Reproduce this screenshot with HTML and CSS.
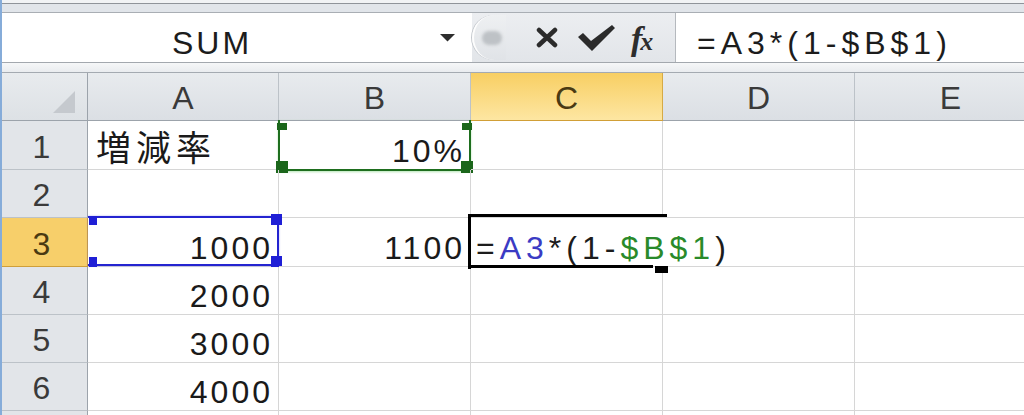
FILE: index.html
```html
<!DOCTYPE html>
<html lang="ja">
<head>
<meta charset="utf-8">
<title>Book1</title>
<link rel="stylesheet" href="styles.css">
</head>
<body>
<div class="app">
  <div class="ribbon-edge"></div>

  <div class="formula-bar">
    <div class="name-box">
      <span class="name">SUM</span>
      <span class="dd">
        <svg width="15" height="8" viewBox="0 0 15 8"><path d="M0 0H15L7.5 7.5Z" fill="#2e2e2e"/></svg>
      </span>
    </div>
    <div class="fb-buttons">
      <span class="grip"><span class="grip-dot"></span></span>
      <svg class="btn-cancel" width="22" height="21" viewBox="0 0 22 21"><path d="M3 3L19 18M19 3L3 18" stroke="#2b2b2b" stroke-width="4.5" stroke-linecap="round"/></svg>
      <svg class="btn-enter" width="38" height="27" viewBox="0 0 38 27"><path d="M1 13L6 9L14 17L35 1L38 4L15 27Z" fill="#2b2b2b"/></svg>
      <span class="fx">f<span class="fx-x">x</span></span>
    </div>
    <div class="fb-input">=A3*(1-$B$1)</div>
  </div>

  <div class="fb-gap"></div>

  <div class="sheet">
    <!-- column headers -->
    <div class="corner"><span class="tri"></span></div>
    <div class="cell hd">A</div>
    <div class="cell hd">B</div>
    <div class="cell hd hd-on">C</div>
    <div class="cell hd">D</div>
    <div class="cell hd">E</div>

    <!-- row 1 -->
    <div class="cell rh">1</div>
    <div class="cell jp">増減率</div>
    <div class="cell num">10%
      <div class="range range-green">
        <i class="h tl"></i><i class="h tr"></i><i class="h bl"></i><i class="h br"></i>
      </div>
    </div>
    <div class="cell"></div>
    <div class="cell"></div>
    <div class="cell"></div>

    <!-- row 2 -->
    <div class="cell rh">2</div>
    <div class="cell"></div>
    <div class="cell"></div>
    <div class="cell"></div>
    <div class="cell"></div>
    <div class="cell"></div>

    <!-- row 3 -->
    <div class="cell rh rh-on">3</div>
    <div class="cell num">1000
      <div class="range range-blue">
        <i class="h tl"></i><i class="h tr"></i><i class="h bl"></i><i class="h br"></i>
      </div>
    </div>
    <div class="cell num">1100</div>
    <div class="cell active">
      <div class="editor">=<span class="ref-a">A3</span>*(1-<span class="ref-b">$B$1</span>)</div>
      <i class="cur cur-top"></i><i class="cur cur-left"></i><i class="cur cur-bottom"></i><i class="cur fill-handle"></i>
    </div>
    <div class="cell"></div>
    <div class="cell"></div>

    <!-- row 4 -->
    <div class="cell rh">4</div>
    <div class="cell num">2000</div>
    <div class="cell"></div>
    <div class="cell"></div>
    <div class="cell"></div>
    <div class="cell"></div>

    <!-- row 5 -->
    <div class="cell rh">5</div>
    <div class="cell num">3000</div>
    <div class="cell"></div>
    <div class="cell"></div>
    <div class="cell"></div>
    <div class="cell"></div>

    <!-- row 6 -->
    <div class="cell rh">6</div>
    <div class="cell num">4000</div>
    <div class="cell"></div>
    <div class="cell"></div>
    <div class="cell"></div>
    <div class="cell"></div>

    <!-- row 7 (only its top edge is in view) -->
    <div class="cell rh"></div>
    <div class="cell"></div>
    <div class="cell"></div>
    <div class="cell"></div>
    <div class="cell"></div>
    <div class="cell"></div>
  </div>
</div>
</body>
</html>
```

FILE: styles.css
```css
html, body {
  margin: 0;
  padding: 0;
  background: #fff;
}

body {
  width: 1024px;
  height: 415px;
  overflow: hidden;
  font-family: "Liberation Sans", "Noto Sans CJK JP", sans-serif;
  color: #1a1a1a;
}

.app {
  height: 415px;
  box-sizing: border-box;
  border-left: 2px solid #86acd9;
  overflow: hidden;
}

/* thin strip left of the ribbon above the formula bar */
.ribbon-edge {
  height: 13px;
  box-sizing: border-box;
  border-bottom: 1px solid #a9aeb4;
  background: linear-gradient(to bottom, #f1f3f5 0 3px, #8f949a 3px 4px, #e1e5ea 4px);
}

/* ---------- formula bar ---------- */
.formula-bar {
  display: flex;
  height: 50px;
  box-sizing: border-box;
  border-bottom: 1px solid #a3a8ae;
  font-size: 32px;
  line-height: 1;
}

.name-box {
  width: 470px;
  display: flex;
  align-items: center;
  padding-top: 10px;
  box-sizing: border-box;
  background: #fff;
}

.name {
  flex: 1;
  text-align: center;
  letter-spacing: 3px;
  color: #1c1c1c;
}

.dd {
  width: 50px;
  display: flex;
  justify-content: center;
  margin-top: -10px;
}

.fb-buttons {
  width: 203px;
  display: flex;
  align-items: center;
  background: linear-gradient(to bottom, #eceef1, #e2e5e9);
}

.grip {
  width: 34px;
  height: 45px;
  box-sizing: border-box;
  border-radius: 23px 0 0 23px;
  border-left: 2px solid #fdfdfd;
  box-shadow: -1px 0 0 #c4c8cd;
  background: linear-gradient(to bottom, #eef0f2, #e0e3e7);
  display: flex;
  align-items: center;
  padding-left: 8px;
}

.grip-dot {
  width: 20px;
  height: 14px;
  border-radius: 7px;
  background: #bec2c6;
  filter: blur(1.5px);
}

.btn-cancel {
  margin-left: 30px;
}

.btn-enter {
  margin-left: 19px;
}

.fx {
  margin-left: 16px;
  font-family: "Liberation Serif", serif;
  font-style: italic;
  font-weight: bold;
  font-size: 34px;
  color: #2d2d2d;
  margin-top: 2px;
}

.fx-x {
  font-size: 26px;
  margin-left: -2px;
}

.fb-input {
  flex: 1;
  display: flex;
  align-items: center;
  padding: 10px 0 0 21px;
  border-left: 1px solid #b5b9be;
  background: #fff;
  letter-spacing: 5px;
  color: #1c1c1c;
}

.fb-gap {
  height: 10px;
  box-sizing: border-box;
  border-bottom: 1px solid #a4aab1;
  background: linear-gradient(to bottom, #f6f7f8, #e9ecef);
}

/* ---------- grid ---------- */
.sheet {
  display: grid;
  grid-template-columns: 86px 191px repeat(4, 192px);
  grid-template-rows: 48px 49px 48px 49px 48px 48px 48px 48px;
}

.cell {
  position: relative;
  box-sizing: border-box;
  border-right: 1px solid #d6d6d6;
  border-bottom: 1px solid #d6d6d6;
  display: flex;
  align-items: flex-end;
  padding: 0 5px 2px 6px;
  font-size: 32px;
  line-height: 1;
  letter-spacing: 3px;
  white-space: nowrap;
}

.num {
  justify-content: flex-end;
}

.jp {
  font-family: "Noto Sans CJK JP", sans-serif;
  font-size: 35px;
  letter-spacing: 5px;
  padding-left: 8px;
  padding-bottom: 6px;
}

.corner {
  box-sizing: border-box;
  border-right: 1px solid #9ca3ab;
  border-bottom: 1px solid #9ca3ab;
  background: linear-gradient(to bottom, #e8ebee, #dde1e5);
  display: flex;
  justify-content: flex-end;
  align-items: flex-end;
  padding: 0 12px 7px 0;
}

.tri {
  width: 22px;
  height: 22px;
  background: #c5c9ce;
  clip-path: polygon(100% 0, 100% 100%, 0 100%);
}

.hd {
  justify-content: center;
  letter-spacing: 0;
  padding: 0 0 6px;
  color: #3a3a3a;
  background: linear-gradient(to bottom, #e8ebee, #dbdfe4);
  border-right: 1px solid #bcc2c8;
  border-bottom: 1px solid #9ca3ab;
}

.hd-on {
  color: #4a3a12;
  background: linear-gradient(to bottom, #f8cf63, #fde6a2);
  border-right-color: #d6aa45;
  border-bottom-color: #d19f36;
}

.rh {
  justify-content: center;
  letter-spacing: 0;
  padding: 0 6px 6px 0;
  color: #3a3a3a;
  background: #e2e5e9;
  border-right: 1px solid #9ca3ab;
  border-bottom: 1px solid #bcc2c8;
}

.rh-on {
  color: #4a3a12;
  background: #f7cf6a;
  border-right-color: #cf9f3a;
  border-bottom-color: #cf9f3a;
}

/* ---------- reference ranges ---------- */
.range {
  position: absolute;
  box-sizing: border-box;
  pointer-events: none;
}

.range .h {
  position: absolute;
  display: block;
}

.range-green {
  left: -1px;
  top: -1px;
  width: 193px;
  height: 51px;
  border: 2px solid #1e6e1e;
  border-top: 0;
  box-shadow: 0 1px 2px rgba(90, 200, 90, 0.45);
}

.range-green .h { background: #1b661b; }
.range-green .tl { left: -3px; top: 3px; width: 10px; height: 7px; }
.range-green .tr { right: -3px; top: 3px; width: 10px; height: 7px; }
.range-green .bl { left: -4px; bottom: -4px; width: 12px; height: 12px; }
.range-green .br { right: -4px; bottom: -4px; width: 12px; height: 12px; }

.range-blue {
  left: 0;
  top: -2px;
  width: 191px;
  height: 50px;
  border: 2px solid #2424d0;
  border-left: 0;
  box-shadow: 0 0 2px rgba(90, 90, 230, 0.45);
}

.range-blue .h { background: #1f1fd6; }
.range-blue .tl { left: 1px; top: -2px; width: 8px; height: 9px; }
.range-blue .bl { left: 1px; bottom: -3px; width: 8px; height: 10px; }
.range-blue .tr { right: -5px; top: -4px; width: 11px; height: 11px; }
.range-blue .br { right: -5px; bottom: -3px; width: 11px; height: 11px; }

/* ---------- in-cell editing ---------- */
.active {
  z-index: 2;
}

.editor {
  position: absolute;
  left: 0;
  top: 0;
  width: 262px;
  height: 48px;
  box-sizing: border-box;
  background: #fff;
  display: flex;
  align-items: flex-end;
  padding: 0 0 2px 5px;
  letter-spacing: 5px;
  color: #1c1c1c;
}

.ref-a { color: #3b3bc4; }
.ref-b { color: #2a8a2a; }

.cur {
  position: absolute;
  display: block;
  background: #000;
}

.cur-top { left: -3px; top: -4px; width: 199px; height: 3px; }
.cur-left { left: -3px; top: -4px; width: 3px; height: 55px; }
.cur-bottom { left: -3px; top: 47px; width: 185px; height: 3px; }
.fill-handle { left: 184px; top: 47px; width: 13px; height: 7px; border-top: 1px solid #fff; }
```
